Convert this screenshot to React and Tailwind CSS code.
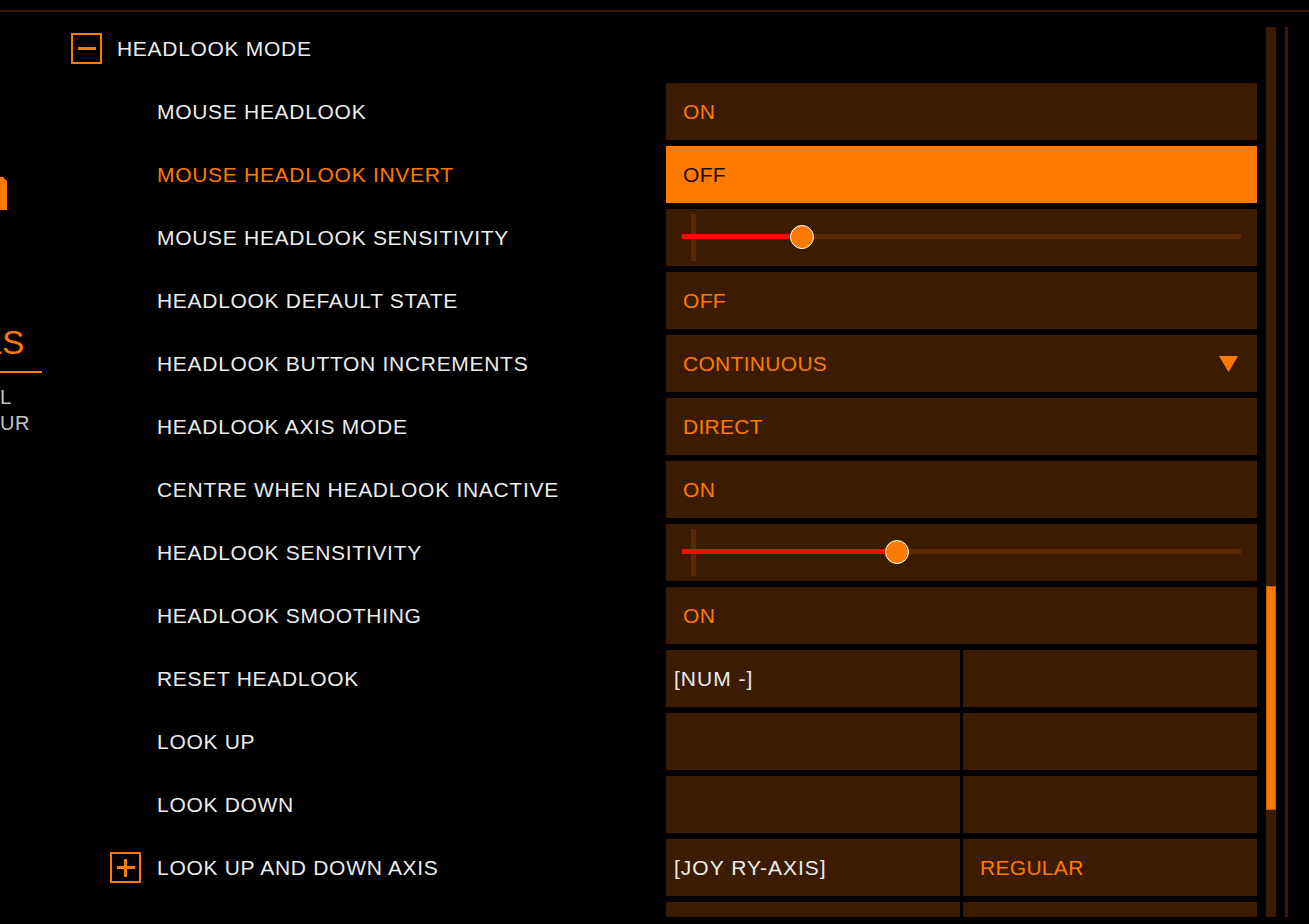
import React from 'react'

const ORANGE = '#ff7a00'

const rows = [
  { label: 'MOUSE HEADLOOK', type: 'value', value: 'ON' },
  { label: 'MOUSE HEADLOOK INVERT', type: 'value', value: 'OFF', active: true },
  { label: 'MOUSE HEADLOOK SENSITIVITY', type: 'slider', pct: 21.5 },
  { label: 'HEADLOOK DEFAULT STATE', type: 'value', value: 'OFF' },
  { label: 'HEADLOOK BUTTON INCREMENTS', type: 'dropdown', value: 'CONTINUOUS' },
  { label: 'HEADLOOK AXIS MODE', type: 'value', value: 'DIRECT' },
  { label: 'CENTRE WHEN HEADLOOK INACTIVE', type: 'value', value: 'ON' },
  { label: 'HEADLOOK SENSITIVITY', type: 'slider', pct: 38.5 },
  { label: 'HEADLOOK SMOOTHING', type: 'value', value: 'ON' },
  { label: 'RESET HEADLOOK', type: 'bind', primary: '[NUM -]', secondary: '' },
  { label: 'LOOK UP', type: 'bind', primary: '', secondary: '' },
  { label: 'LOOK DOWN', type: 'bind', primary: '', secondary: '' },
  { label: 'LOOK UP AND DOWN AXIS', type: 'bind', primary: '[JOY RY-AXIS]', secondary: 'REGULAR', orangeSecondary: true, expand: true },
  { label: '', type: 'bind', primary: '', secondary: '' },
]

const font = { fontFamily: '"Liberation Sans", Arial, sans-serif' }

const ToggleBox = ({ plus }) => (
  <div className="relative flex h-[31px] w-[31px] shrink-0 items-center justify-center border-2 border-[#ff7a00]">
    <div className="h-[3px] w-[18px] bg-[#ff7a00]" />
    {plus && <div className="absolute h-[18px] w-[3px] bg-[#ff7a00]" />}
  </div>
)

const Slider = ({ pct }) => (
  <div className="relative h-[57px] w-[591px] bg-[#3c1c00]">
    <div className="absolute left-[25px] top-[5px] bottom-[5px] w-[5px] bg-[#5a2a00]" />
    <div className="absolute left-[16px] right-[16px] top-[25px] h-[5px] bg-[#5a2a00]">
      <div className="absolute left-0 top-0 h-full bg-[#ff0a00]" style={{ width: `${pct}%` }} />
      <div
        className="absolute top-1/2 h-[24px] w-[24px] -translate-x-1/2 -translate-y-1/2 rounded-full border-[1.5px] border-white bg-[#ff7a00]"
        style={{ left: `${pct}%` }}
      />
    </div>
  </div>
)

const Cell = ({ row }) => {
  if (row.type === 'slider') return <Slider pct={row.pct} />
  if (row.type === 'bind') {
    return (
      <div className="flex h-[57px] w-[591px] gap-[3px]">
        <div className="flex w-[294px] items-center bg-[#3c1c00] pl-[8px] text-[21px] tracking-[1px] text-[#ececec]">
          {row.primary}
        </div>
        <div
          className={`flex w-[294px] items-center bg-[#3c1c00] pl-[17px] text-[21px] tracking-[0.3px] ${
            row.orangeSecondary ? 'text-[#ff7a00]' : 'text-[#ececec]'
          }`}
        >
          {row.secondary}
        </div>
      </div>
    )
  }
  return (
    <div
      className={`flex h-[57px] w-[591px] items-center justify-between pl-[17px] pr-[19px] text-[21px] tracking-[0.3px] ${
        row.active ? 'bg-[#ff7a00] text-[#1e0c00]' : 'bg-[#3c1c00] text-[#ff7a00]'
      }`}
    >
      <span>{row.value}</span>
      {row.type === 'dropdown' && (
        <svg width="19" height="16" viewBox="0 0 19 16">
          <polygon points="0,0 19,0 9.5,16" fill={ORANGE} />
        </svg>
      )}
    </div>
  )
}

export default function App() {
  return (
    <div className="flex h-[924px] w-[1309px] flex-col overflow-hidden bg-black leading-none" style={font}>
      <div className="mt-[10px] h-[2px] w-full bg-[#3a1b00]" />
      <div className="flex h-[905px] overflow-hidden">
        {/* clipped side menu */}
        <div className="flex w-[71px] shrink-0 flex-col overflow-hidden">
          <svg className="mt-[165px]" width="7" height="33" viewBox="0 0 7 33">
            <polygon points="0,0 3,0 7,4 7,33 0,33" fill={ORANGE} />
          </svg>
          <div className="-ml-[16px] mt-[116px] whitespace-nowrap text-[33px] text-[#ff7a00]">LS</div>
          <div className="mt-[12px] h-[2px] w-[42px] bg-[#ff7a00]" />
          <div className="mt-[11px] text-[20px] leading-[26px] tracking-[0.5px] text-[#c4c4c4]">
            <div>L</div>
            <div>UR</div>
          </div>
        </div>

        {/* settings list */}
        <div className="flex w-[1186px] shrink-0 flex-col pt-[21px]">
          <div className="flex h-[31px] items-center gap-[15px]">
            <ToggleBox />
            <span className="text-[21px] tracking-[0.7px] text-[#ececec]">HEADLOOK MODE</span>
          </div>
          <div className="mt-[19px] flex flex-col gap-[6px]">
            {rows.map((row, i) => (
              <div key={i} className="flex h-[57px] items-center">
                <div className="flex w-[595px] items-center">
                  {row.expand ? (
                    <div className="flex items-center pl-[39px]">
                      <ToggleBox plus />
                      <span className="ml-[16px] text-[21px] tracking-[0.7px] text-[#ececec]">{row.label}</span>
                    </div>
                  ) : (
                    <span
                      className={`pl-[86px] text-[21px] tracking-[0.7px] ${
                        row.active ? 'text-[#ff7a00]' : 'text-[#ececec]'
                      }`}
                    >
                      {row.label}
                    </span>
                  )}
                </div>
                <Cell row={row} />
              </div>
            ))}
          </div>
        </div>

        {/* scrollbar */}
        <div className="ml-[9px] mt-[15px] h-[890px] w-[10px] shrink-0 bg-[#3c1c00]">
          <div className="mt-[559px] h-[224px] w-full border border-[#c85a00] bg-[#ff7a00]" />
        </div>
        <div className="ml-[9px] mt-[15px] h-[890px] w-[3px] shrink-0 bg-[#3a1b00]" />
      </div>
    </div>
  )
}
